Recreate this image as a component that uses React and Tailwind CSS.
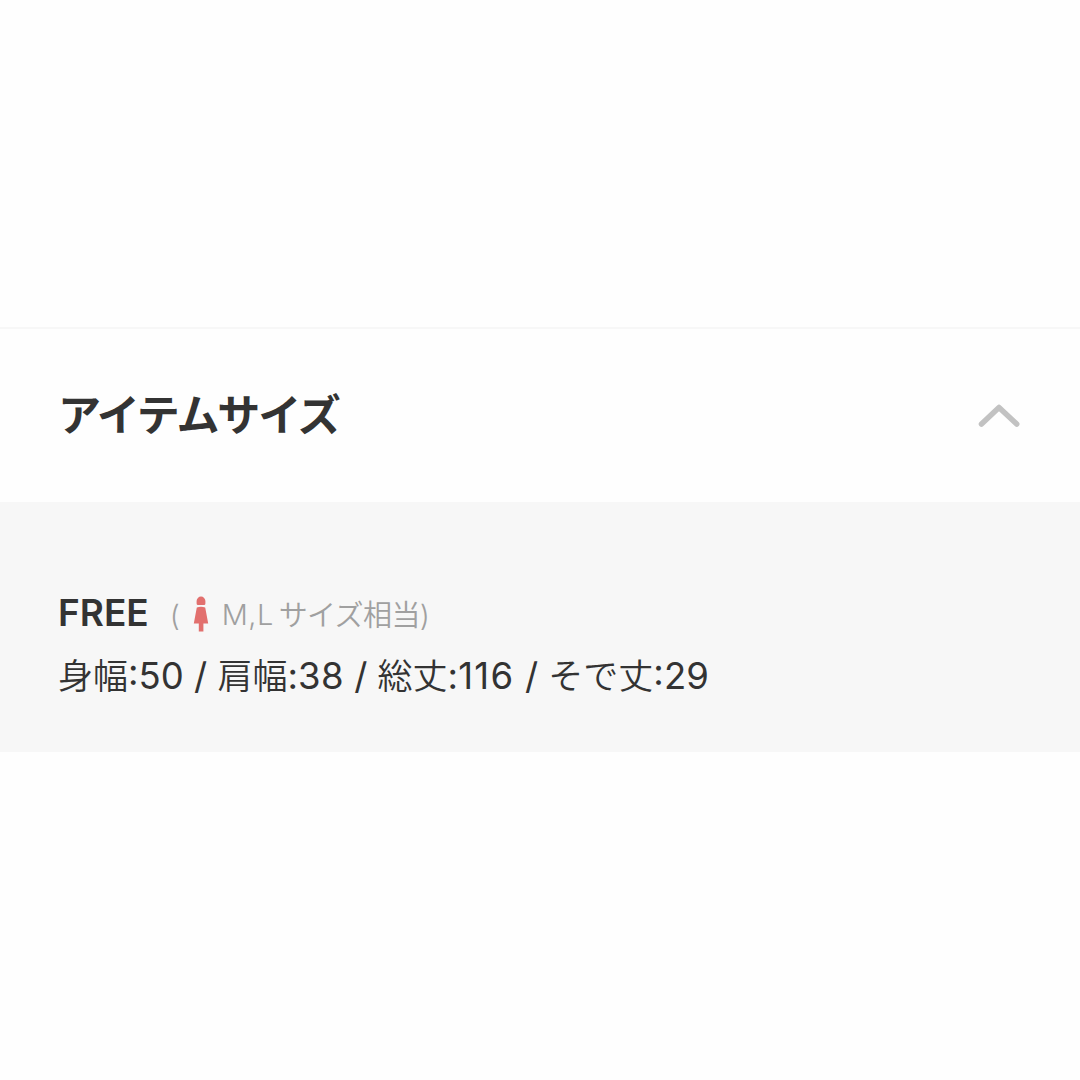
const measurements = [
  { label: "身幅", value: "50" },
  { label: "肩幅", value: "38", spacing: "tracking-[0.4px]" },
  { label: "総丈", value: "116", spacing: "tracking-[1.4px]" },
  { label: "そで丈", value: "29" }
];

function ChevronUp() {
  return (
    <svg width="42" height="26" viewBox="0 0 42 26" fill="none" className="mr-[60px]">
      <path d="M3.5 21L21 4.5L38.7 21" stroke="#c2c2c2" strokeWidth="5.5" strokeLinecap="round" strokeLinejoin="round" />
    </svg>
  );
}

function WomanIcon() {
  return (
    <svg width="16" height="36" viewBox="0 0 16 36" fill="#e2706e">
      <path d="M3.6 7.5V5A4.4 4.4 0 0 1 12.4 5V7.5Q12.4 9 11 9H5Q3.6 9 3.6 7.5Z" />
      <path d="M3.8 11.4Q8 10.2 12.2 11.4L15.2 27.5H10.4V35.5H5.8V27.5H0.8Z" />
    </svg>
  );
}

export default function App() {
  return (
    <div className="h-[1080px] bg-[#fefefe] pt-[327px] font-['Inter','Noto_Sans_CJK_JP',sans-serif] text-[#333]">
      <header className="flex h-[175px] items-center justify-between border-t-2 border-[#f7f7f7] pl-[58px]">
        <h2 className="pb-[2px] text-[43px] leading-[60px] font-bold tracking-[-2.1px]">アイテムサイズ</h2>
        <ChevronUp />
      </header>

      <section className="h-[250px] bg-[#f7f7f7] pt-[84px] pl-[58px]">
        <div className="flex h-[56px] items-center whitespace-nowrap">
          <span className="pb-[3px] text-[37px] font-semibold">FREE</span>
          <span className="ml-[21px] flex items-center text-[29px] font-light text-[#a0a0a0]">
            <span className="pt-[3px]">(</span>
            <span className="mr-[13px] ml-[13px]">
              <WomanIcon />
            </span>
            <span className="pt-[2px] tracking-[0.4px]">M,L</span>
            <span className="ml-[5px] pt-[4px] font-[350] tracking-[-0.6px]">サイズ相当)</span>
          </span>
        </div>
        <p className="h-[64px] pt-[2px] text-[36.5px] leading-[64px] whitespace-nowrap">
          {measurements.map((m, i) => (
            <span key={m.label}>
              {i > 0 && " / "}
              <span className="text-[35px] font-[350]">{m.label}</span>:
              <span className={m.spacing}>{m.value}</span>
            </span>
          ))}
        </p>
      </section>
    </div>
  );
}
